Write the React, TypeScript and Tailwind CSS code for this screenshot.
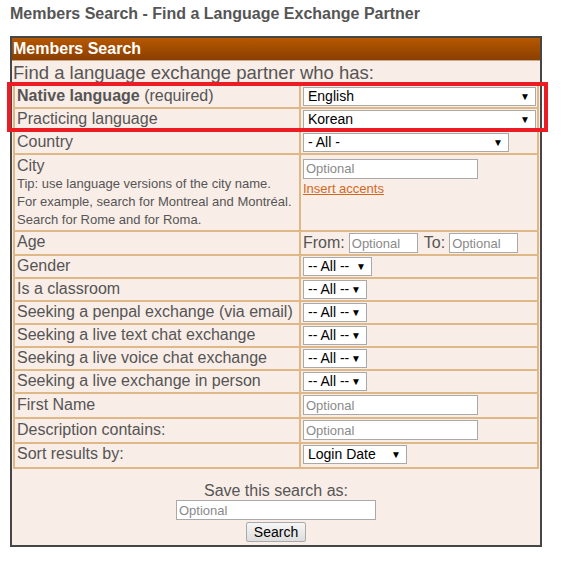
import React from "react";

function Select({ value, w }: { value: string; w: string }) {
  return (
    <div
      role="combobox"
      className={`flex h-[19px] ${w} items-center justify-between border border-[#a9a9a9] bg-white pl-[4px] pr-[5px] text-[14px] leading-[15px] text-black`}
    >
      <span>{value}</span>
      <span className="text-[10px] leading-[10px]">▼</span>
    </div>
  );
}

function TextInput({ w }: { w: string }) {
  return (
    <input
      type="text"
      placeholder="Optional"
      className={`h-[20px] ${w} border border-[#a9a9a9] bg-white px-[2px] text-[13px] text-black outline-none placeholder:text-[#8a8a8a]`}
    />
  );
}

function Row({
  label,
  h = "h-[21px]",
  lpt = "pt-0",
  children,
}: {
  label: React.ReactNode;
  h?: string;
  lpt?: string;
  children?: React.ReactNode;
}) {
  return (
    <div className={`grid grid-cols-[284px_1fr] gap-[2px] ${h}`}>
      <div className={`bg-[#f9ede7] pl-[2px] ${lpt} text-[16px] leading-[19px] text-[#555]`}>{label}</div>
      <div className="flex items-start gap-[4px] bg-[#f9ede7] pl-[2px] pt-[1px]">{children}</div>
    </div>
  );
}

export default function App() {
  const yesNo = [
    "Is a classroom",
    "Seeking a penpal exchange (via email)",
    "Seeking a live text chat exchange",
    "Seeking a live voice chat exchange",
    "Seeking a live exchange in person",
  ];

  return (
    <div className="relative h-[561px] w-[564px] bg-white font-['Liberation_Sans',Arial,sans-serif]">
      <h1 className="pl-[10px] pt-[5px] text-[16px] font-bold leading-[18px] text-[#555]">
        Members Search - Find a Language Exchange Partner
      </h1>

      <div className="ml-[10px] mt-[13px] w-[532px] border-2 border-[#464646] bg-[#f9ede7]">
        <div className="h-[22px] bg-gradient-to-b from-[#b65800] to-[#8b3f00] pl-[1px] text-[16px] font-bold leading-[21px] text-white">
          Members Search
        </div>
        <div className="border-t border-[#c8a88a] pl-[1px] pt-[1px] text-[18.5px] leading-[21px] text-[#555]">
          Find a language exchange partner who has:
        </div>

        <div className="mx-[1px] mt-[1px] flex flex-col gap-[2px] bg-[#deb887] p-[2px]">
          <Row
            label={
              <>
                <b>Native language</b> (required)
              </>
            }
          >
            <Select value="English" w="w-[233px]" />
          </Row>
          <Row label="Practicing language">
            <Select value="Korean" w="w-[233px]" />
          </Row>
          <Row label="Country">
            <Select value="- All -" w="w-[206px]" />
          </Row>
          <div className="grid h-[75px] grid-cols-[284px_1fr] gap-[2px]">
            <div className="bg-[#f9ede7] pl-[2px] pt-[1px] text-[#555]">
              <div className="text-[16px] leading-[19px]">City</div>
              <div className="text-[13px] leading-[18px]">
                Tip: use language versions of the city name.
                <br />
                For example, search for Montreal and Montréal.
                <br />
                Search for Rome and for Roma.
              </div>
            </div>
            <div className="bg-[#f9ede7] pl-[2px] pt-[1px]">
              <TextInput w="w-[175px]" />
              <div className="leading-[15px]">
                <a href="#" className="text-[13px] leading-[15px] text-[#d2691e] underline">
                  Insert accents
                </a>
              </div>
            </div>
          </div>
          <Row label="Age" h="h-[22px]">
            <span className="text-[16px] leading-[20px] text-[#555]">From:</span>
            <TextInput w="w-[69px]" />
            <span className="ml-[2px] text-[16px] leading-[20px] text-[#555]">To:</span>
            <TextInput w="w-[69px]" />
          </Row>
          <Row label="Gender">
            <Select value="-- All --" w="w-[69px]" />
          </Row>
          {yesNo.map((l) => (
            <Row key={l} label={l}>
              <Select value="-- All --" w="w-[64px]" />
            </Row>
          ))}
          <Row label="First Name" h="h-[23px]" lpt="pt-[1px]">
            <TextInput w="w-[175px]" />
          </Row>
          <Row label="Description contains:" h="h-[23px]" lpt="pt-[1px]">
            <TextInput w="w-[175px]" />
          </Row>
          <Row label="Sort results by:" h="h-[23px]">
            <Select value="Login Date" w="w-[104px]" />
          </Row>
        </div>

        <div className="flex flex-col items-center pb-[3px] pt-[12px]">
          <div className="text-[16px] leading-[19px] text-[#555]">Save this search as:</div>
          <TextInput w="w-[200px]" />
          <button className="mt-[2px] h-[20px] rounded-[2px] border border-[#a9a9a9] bg-gradient-to-b from-[#f6f6f6] to-[#dedede] px-[7px] text-[14px] leading-[16px] text-black">
            Search
          </button>
        </div>
      </div>

      <div className="pointer-events-none absolute left-[7px] top-[82px] h-[50px] w-[541px] border-4 border-[#ec1c24]" />
    </div>
  );
}
